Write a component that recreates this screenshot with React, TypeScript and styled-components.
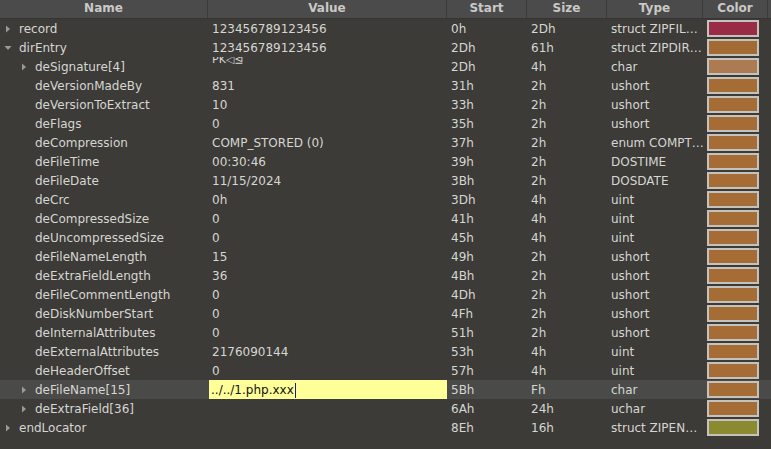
import React from "react";
import styled, { createGlobalStyle } from "styled-components";

type Row = {
  name: string;
  value: string;
  start: string;
  size: string;
  type: string;
  color: string;
  depth: number;
  arrow?: "right" | "down";
  selected?: boolean;
  editing?: boolean;
  clipped?: boolean;
};

const rows: Row[] = [
  { name: "record", value: "123456789123456", start: "0h", size: "2Dh", type: "struct ZIPFIL…", color: "#9a2b47", depth: 0, arrow: "right" },
  { name: "dirEntry", value: "123456789123456", start: "2Dh", size: "61h", type: "struct ZIPDIR…", color: "#a36a33", depth: 0, arrow: "down" },
  { name: "deSignature[4]", value: "PK◁⊴", start: "2Dh", size: "4h", type: "char", color: "#ad7b51", depth: 1, arrow: "right", clipped: true },
  { name: "deVersionMadeBy", value: "831", start: "31h", size: "2h", type: "ushort", color: "#a66c35", depth: 1 },
  { name: "deVersionToExtract", value: "10", start: "33h", size: "2h", type: "ushort", color: "#a66c35", depth: 1 },
  { name: "deFlags", value: "0", start: "35h", size: "2h", type: "ushort", color: "#a66c35", depth: 1 },
  { name: "deCompression", value: "COMP_STORED (0)", start: "37h", size: "2h", type: "enum COMPT…", color: "#a66c35", depth: 1 },
  { name: "deFileTime", value: "00:30:46", start: "39h", size: "2h", type: "DOSTIME", color: "#a66c35", depth: 1 },
  { name: "deFileDate", value: "11/15/2024", start: "3Bh", size: "2h", type: "DOSDATE", color: "#a66c35", depth: 1 },
  { name: "deCrc", value: "0h", start: "3Dh", size: "4h", type: "uint", color: "#a66c35", depth: 1 },
  { name: "deCompressedSize", value: "0", start: "41h", size: "4h", type: "uint", color: "#a66c35", depth: 1 },
  { name: "deUncompressedSize", value: "0", start: "45h", size: "4h", type: "uint", color: "#a66c35", depth: 1 },
  { name: "deFileNameLength", value: "15", start: "49h", size: "2h", type: "ushort", color: "#a66c35", depth: 1 },
  { name: "deExtraFieldLength", value: "36", start: "4Bh", size: "2h", type: "ushort", color: "#a66c35", depth: 1 },
  { name: "deFileCommentLength", value: "0", start: "4Dh", size: "2h", type: "ushort", color: "#a66c35", depth: 1 },
  { name: "deDiskNumberStart", value: "0", start: "4Fh", size: "2h", type: "ushort", color: "#a66c35", depth: 1 },
  { name: "deInternalAttributes", value: "0", start: "51h", size: "2h", type: "ushort", color: "#a66c35", depth: 1 },
  { name: "deExternalAttributes", value: "2176090144", start: "53h", size: "4h", type: "uint", color: "#a66c35", depth: 1 },
  { name: "deHeaderOffset", value: "0", start: "57h", size: "4h", type: "uint", color: "#a66c35", depth: 1 },
  { name: "deFileName[15]", value: "../../1.php.xxx", start: "5Bh", size: "Fh", type: "char", color: "#a66c35", depth: 1, arrow: "right", selected: true, editing: true },
  { name: "deExtraField[36]", value: "", start: "6Ah", size: "24h", type: "uchar", color: "#a66c35", depth: 1, arrow: "right" },
  { name: "endLocator", value: "", start: "8Eh", size: "16h", type: "struct ZIPEN…", color: "#8c8a31", depth: 0, arrow: "right" },
];

const columns = ["Name", "Value", "Start", "Size", "Type", "Color"];

function Arrow({ dir }: { dir: "right" | "down" }) {
  return (
    <ArrowBox>
      {dir === "right" ? (
        <svg width="8" height="8" viewBox="0 0 8 8">
          <path d="M2 0.5 L6 4 L2 7.5 Z" fill="#9a9a96" />
        </svg>
      ) : (
        <svg width="8" height="8" viewBox="0 0 8 8">
          <path d="M0.5 2 L7.5 2 L4 6 Z" fill="#9a9a96" />
        </svg>
      )}
    </ArrowBox>
  );
}

export default function App() {
  return (
    <>
      <GlobalStyle />
      <Table>
        <HeaderRow>
          {columns.map((c) => (
            <HeaderCell key={c}>{c}</HeaderCell>
          ))}
          <HeaderCell />
        </HeaderRow>
        {rows.map((r) => (
          <DataRow key={r.name} $selected={r.selected}>
            <NameCell $depth={r.depth}>
              {r.arrow ? <Arrow dir={r.arrow} /> : <ArrowBox />}
              {r.name}
            </NameCell>
            {r.editing ? (
              <EditCell>
                {r.value}
                <Caret />
              </EditCell>
            ) : (
              <Cell>{r.clipped ? <Clipped>{r.value}</Clipped> : r.value}</Cell>
            )}
            <Cell>{r.start}</Cell>
            <Cell>{r.size}</Cell>
            <Cell>{r.type}</Cell>
            <SwatchCell>
              <Swatch $color={r.color} />
            </SwatchCell>
            <Cell />
          </DataRow>
        ))}
      </Table>
    </>
  );
}

const GlobalStyle = createGlobalStyle`
  html, body {
    margin: 0;
    padding: 0;
    background: #3c3b37;
    width: 771px;
    height: 449px;
    overflow: hidden;
  }
`;

const Table = styled.div`
  width: 771px;
  height: 449px;
  background: #3c3b37;
  font-family: "DejaVu Sans", sans-serif;
  font-size: 12px;
  color: #d6d6d2;
`;

const gridCols = "208px 239px 80px 80px 96px 65px 1fr";

const HeaderRow = styled.div`
  display: grid;
  grid-template-columns: ${gridCols};
  height: 19px;
  background: #4b4b4b;
  border-bottom: 1px solid #353532;
  box-sizing: border-box;
`;

const HeaderCell = styled.div`
  display: flex;
  align-items: center;
  justify-content: center;
  font-weight: bold;
  color: #c9c9c7;
  border-right: 1px solid #3a3a38;
  box-sizing: border-box;
  line-height: 17px;
  padding-bottom: 1px;

  &:last-child {
    border-right: none;
  }
`;

const DataRow = styled.div<{ $selected?: boolean }>`
  display: grid;
  grid-template-columns: ${gridCols};
  height: 19px;
  background: ${(p) => (p.$selected ? "#4a4a48" : "transparent")};
`;

const Cell = styled.div`
  display: flex;
  align-items: center;
  padding-left: 4px;
  padding-top: 1px;
  white-space: nowrap;
  overflow: hidden;
  line-height: 18px;
`;

const NameCell = styled(Cell)<{ $depth: number }>`
  padding-left: ${(p) => 4 + p.$depth * 16}px;
`;

const ArrowBox = styled.span`
  display: inline-flex;
  align-items: center;
  justify-content: flex-start;
  width: 15px;
  height: 18px;
  flex-shrink: 0;
`;

const Clipped = styled.span`
  display: inline-block;
  transform: translateY(-7px);
  font-size: 11px;
  color: #d6d6d2;
`;

const EditCell = styled.div`
  display: flex;
  align-items: center;
  background: #ffff99;
  color: #111;
  padding-left: 2px;
  padding-top: 1px;
  margin-left: 1px;
  white-space: nowrap;
`;

const Caret = styled.span`
  display: inline-block;
  width: 1px;
  height: 15px;
  margin-left: 1px;
  background: #1a1a80;
`;

const SwatchCell = styled.div`
  display: flex;
  align-items: center;
  padding-left: 4px;
`;

const Swatch = styled.div<{ $color: string }>`
  width: 52px;
  height: 17px;
  box-sizing: border-box;
  background: ${(p) => p.$color};
  border: 2px solid #c4c2bc;
`;
